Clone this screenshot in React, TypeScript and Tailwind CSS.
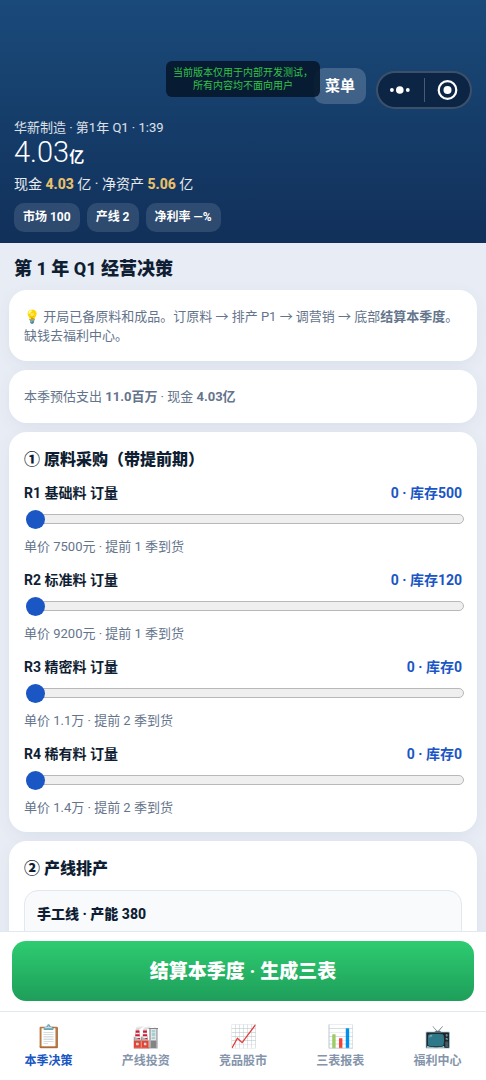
import { useState } from "react";
import clsx from "clsx";

interface Material {
  id: string;
  name: string;
  stock: number;
  price: string;
  lead: number;
}

const MATERIALS: Material[] = [
  { id: "R1", name: "基础料", stock: 500, price: "7500元", lead: 1 },
  { id: "R2", name: "标准料", stock: 120, price: "9200元", lead: 1 },
  { id: "R3", name: "精密料", stock: 0, price: "1.1万", lead: 2 },
  { id: "R4", name: "稀有料", stock: 0, price: "1.4万", lead: 2 },
];

const TABS = [
  { icon: "📋", label: "本季决策" },
  { icon: "🏭", label: "产线投资" },
  { icon: "📈", label: "竞品股市" },
  { icon: "📊", label: "三表报表" },
  { icon: "📺", label: "福利中心" },
];

const CHIPS = ["市场 100", "产线 2", "净利率 —%"];

function Capsule() {
  return (
    <div className="flex h-[38px] w-24 items-center rounded-full border-2 border-white/20 bg-[#0d2544]">
      <button aria-label="更多" className="flex h-full flex-1 items-center justify-center">
        <svg width="22" height="10" viewBox="0 0 22 10" fill="white">
          <circle cx="1.9" cy="5" r="1.9" />
          <circle cx="9.8" cy="5" r="3.8" />
          <circle cx="17.8" cy="5" r="1.9" />
        </svg>
      </button>
      <span className="h-6 w-px bg-white/25" />
      <button aria-label="关闭" className="flex h-full flex-1 items-center justify-center">
        <svg width="22" height="22" viewBox="0 0 22 22" fill="none">
          <circle cx="11.5" cy="11" r="8.8" stroke="white" strokeWidth="2.2" />
          <circle cx="11.5" cy="11" r="4" fill="white" />
        </svg>
      </button>
    </div>
  );
}

function Header() {
  return (
    <header className="relative bg-linear-to-b from-[#1a4a7a] to-[#11305a] px-[14px] pt-[68px] pb-[11px] text-white">
      <div className="flex items-start justify-end gap-[10px]">
        <button className="h-9 rounded-[10px] bg-white/18 px-[11px] text-[15px] font-bold">菜单</button>
        <div className="pt-[3px]">
          <Capsule />
        </div>
      </div>
      <div className="absolute top-[61px] right-[166px] rounded-md bg-[#06172b]/90 px-[7px] py-[5px] text-center text-[10px] leading-[13px] text-[#34c24a]">
        当前版本仅用于内部开发测试，
        <br />
        所有内容均不面向用户
      </div>
      <p className="mt-[9px] text-[13px] leading-5 text-white/85">华新制造 · 第1年 Q1 · 1:39</p>
      <p className="text-[29px] leading-7 font-light">
        4.03<span className="text-[15px] font-bold">亿</span>
      </p>
      <p className="mt-[3px] text-sm leading-5 text-white/90">
        现金 <b className="font-extrabold text-[#e8c06a]">4.03</b> 亿 · 净资产{" "}
        <b className="font-extrabold text-[#e8c06a]">5.06</b> 亿
      </p>
      <div className="mt-[9px] flex gap-[7px]">
        {CHIPS.map((c) => (
          <span key={c} className="rounded-[10px] bg-white/12 px-[9px] py-[5px] text-xs leading-[19px] font-bold">
            {c}
          </span>
        ))}
      </div>
    </header>
  );
}

function Card({ children }: { children: React.ReactNode }) {
  return (
    <section className="rounded-[18px] bg-white px-[15px] shadow-[0_4px_16px_rgba(15,40,80,0.06)]">{children}</section>
  );
}

function MaterialRow({ item }: { item: Material }) {
  const [qty, setQty] = useState(0);
  return (
    <div className="h-[87px]">
      <div className="flex justify-between text-sm leading-5 font-bold">
        <label htmlFor={item.id}>
          {item.id} {item.name} 订量
        </label>
        <span className="text-[#1a56c4]">
          {qty} · 库存{item.stock}
        </span>
      </div>
      <input
        id={item.id}
        type="range"
        min={0}
        max={500}
        value={qty}
        onChange={(e) => setQty(Number(e.target.value))}
        className="mx-0.5 mt-[11px] block h-[10px] w-full appearance-none rounded-full border border-[#b8b8b8] bg-[#efefef] [&::-webkit-slider-thumb]:-ml-px [&::-webkit-slider-thumb]:h-[19px] [&::-webkit-slider-thumb]:w-[19px] [&::-webkit-slider-thumb]:appearance-none [&::-webkit-slider-thumb]:rounded-full [&::-webkit-slider-thumb]:bg-[#1a56c4]"
      />
      <p className="mt-[13px] text-[13px] leading-5 text-[#64748b]">
        单价 {item.price} · 提前 {item.lead} 季到货
      </p>
    </div>
  );
}

export default function App() {
  const [tab, setTab] = useState(0);

  return (
    <div className="flex h-screen flex-col bg-[#e8edf5] font-[Roboto,'Noto_Sans_CJK_SC',sans-serif] text-[#0f1e33]">
      <Header />

      <main className="min-h-0 flex-1 overflow-hidden px-[9px] pt-3">
        <h1 className="mb-[7px] px-[5px] text-lg leading-7 font-extrabold">第 1 年 Q1 经营决策</h1>
        <div className="flex flex-col gap-[9px]">
          <Card>
            <p className="pt-[17px] pb-4 text-[13px] leading-[19px] text-[#64748b]">
              💡 开局已备原料和成品。订原料 → 排产 P1 → 调营销 → 底部<b>结算本季度</b>。缺钱去福利中心。
            </p>
          </Card>
          <Card>
            <p className="pt-[17px] pb-4 text-[13px] leading-5 text-[#64748b]">
              本季预估支出 <b>11.0百万</b> · 现金 <b>4.03亿</b>
            </p>
          </Card>
          <Card>
            <h2 className="pt-[15px] pb-[10px] text-base leading-[26px] font-extrabold">① 原料采购（带提前期）</h2>
            <div className="pb-px">
              {MATERIALS.map((m) => (
                <MaterialRow key={m.id} item={m} />
              ))}
            </div>
          </Card>
          <Card>
            <h2 className="pt-[15px] pb-2 text-base leading-[26px] font-extrabold">② 产线排产</h2>
            <div className="rounded-[14px] border border-[#e2e8f0] bg-[#f8fafc] px-3 py-3">
              <h3 className="text-sm leading-[22px] font-extrabold">手工线 · 产能 380</h3>
              <div className="h-20" />
            </div>
          </Card>
        </div>
      </main>

      <div className="border-t border-[#e2e8f0] bg-white px-3 pt-[9px] pb-[10px]">
        <button className="h-[60px] w-full rounded-[14px] bg-linear-to-b from-[#2ecc71] to-[#1e9e5a] pt-0.5 text-[19px] font-extrabold text-white">
          结算本季度 · 生成三表
        </button>
      </div>

      <nav className="flex border-t border-[#e2e8f0] bg-white pt-[11px] pb-[9px]">
        {TABS.map((t, i) => (
          <button
            key={t.label}
            onClick={() => setTab(i)}
            className={clsx(
              "flex flex-1 flex-col items-center text-xs font-bold",
              i === tab ? "text-[#1a56c4]" : "text-[#8494aa]"
            )}
          >
            <span className="text-[22px] leading-7">{t.icon}</span>
            <span className="leading-5">{t.label}</span>
          </button>
        ))}
      </nav>
    </div>
  );
}
